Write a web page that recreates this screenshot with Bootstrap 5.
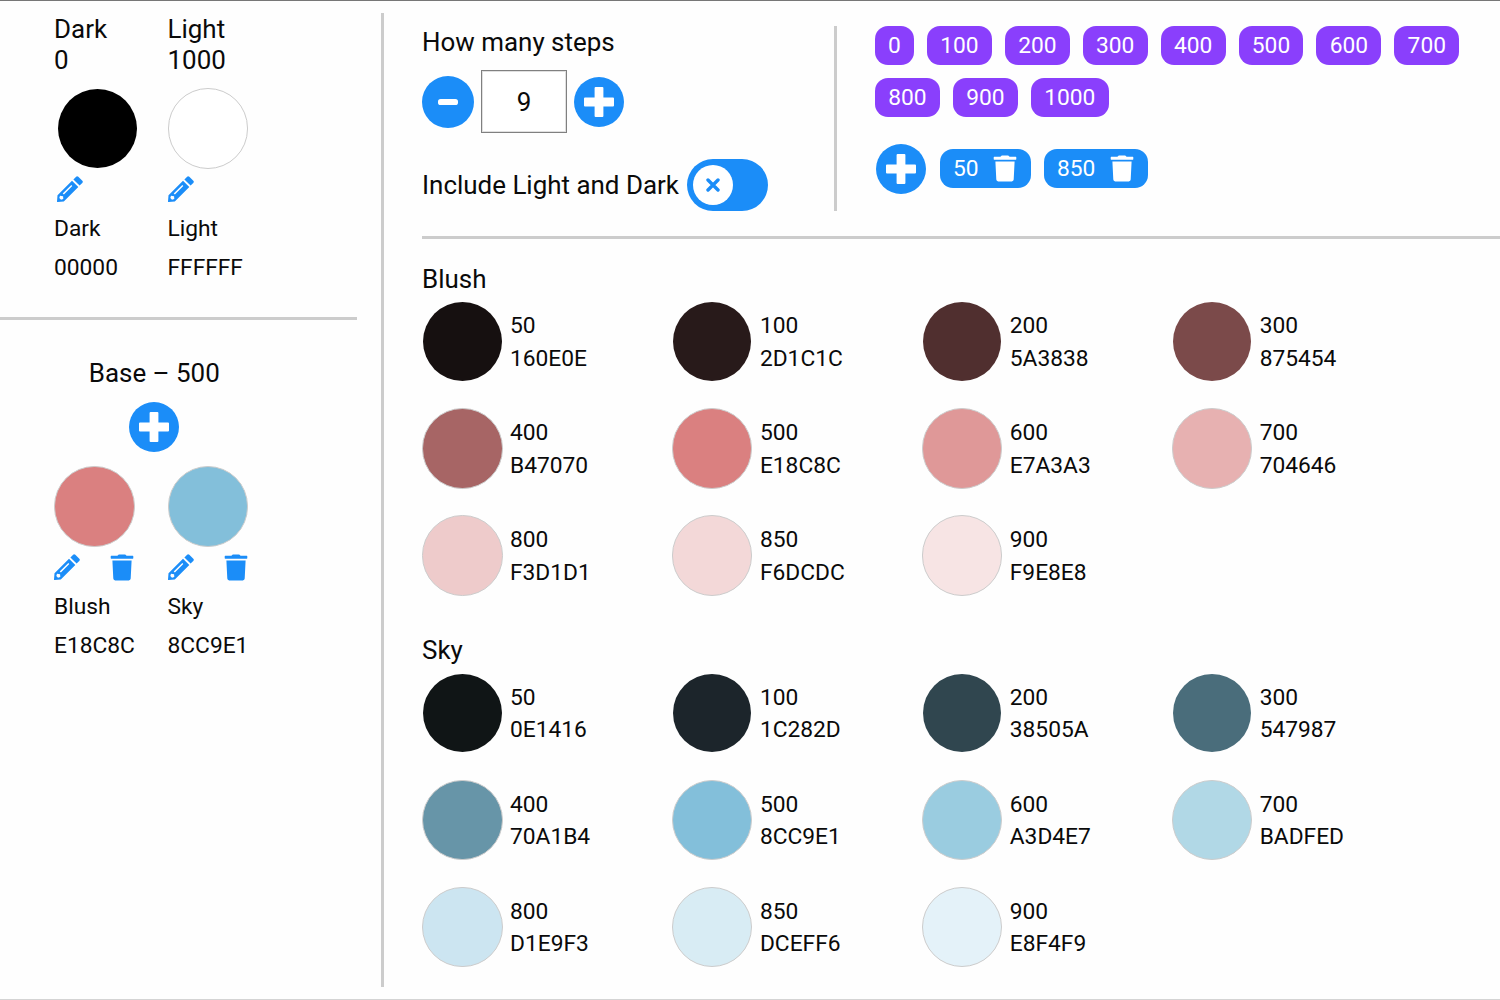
<!DOCTYPE html>
<html lang="en">
<head>
<meta charset="utf-8">
<title>Palette steps</title>
<link href="https://cdn.jsdelivr.net/npm/bootstrap@5.3.0/dist/css/bootstrap.min.css" rel="stylesheet">
<style>
  body { font-family: Roboto, sans-serif; font-size: 22.75px; line-height: 32px; color: #0a0a0a; background: #fefefe; }
  .app-shell { width: 1500px; height: 1000px; border-top: 1px solid #777; border-bottom: 1px solid #d4d4d4; overflow: hidden; }
  .sidebar { width: 384px; height: 974px; margin-top: 12px; border-right: 3px solid #ccc; }
  .sidebar-top { width: 357px; height: 307px; border-bottom: 3px solid #ccc; padding: 1px 0 0 54px; }
  .sidebar-base { padding: 38px 0 0 54px; }
  .base-head { width: 200.5px; }
  .base-head .round-btn { margin-top: 13px; }
  .base-tones { margin-top: 14px; }
  .fs-head { font-size: 25.95px; line-height: 31px; }
  .tone { width: 81px; }
  .tones { gap: 32.5px; }
  .disc { width: 80.5px; height: 80.5px; border-radius: 50%; border: 1px solid #ccc; flex: none; }
  .disc-deep { border-color: transparent; background-clip: padding-box; }
  .disc-end { margin-top: 12px; }
  .disc-inset { margin-left: 3px; }
  .end-icon { margin-top: 7px; margin-bottom: 7px; }
  .base-icons { margin: 7px 1px 6px 0; }
  .tone-name { line-height: 39px; white-space: nowrap; }
  .ico { display: block; fill: #1b8df8; flex: none; }
  .round-btn { width: 50px; height: 50px; border-radius: 50%; background: #1b8df8; border: 0; padding: 0; flex: none; display: flex; align-items: center; justify-content: center; }
  .round-btn svg { display: block; fill: #fff; }
  .minus-btn { width: 52px; height: 52px; }
  .content { width: 1078px; margin-left: 38px; }
  .toolbar { height: 238px; border-bottom: 3px solid #ccc; padding-top: 25px; }
  .steps-panel { width: 415px; height: 185px; border-right: 3px solid #ccc; padding-top: 1px; }
  .step-row { margin-top: 12px; }
  .toggle-row { margin-top: 26px; }
  .step-field { width: 86px; height: 63px; border: 1px solid #808080; outline: 1px solid #e0e0e0; outline-offset: -2px; border-radius: 0; padding: 0; text-align: center; font-size: 25.95px; color: #0a0a0a; background: #fff; margin: 0 7px; }
  .toggle { width: 81px; height: 52px; border-radius: 26px; background: #1b8df8; padding: 6px; margin-left: 8px; }
  .toggle-knob { width: 40px; height: 40px; border-radius: 50%; background: #fff; display: flex; align-items: center; justify-content: center; }
  .chips { width: 600px; padding: .3px 0 0 38px; }
  .chip { height: 39px; width: 64.9px; border-radius: 13px; padding: 1px 0 0; color: #fff; background: #8a3ffc; display: flex; align-items: center; justify-content: center; }
  .chip-zero { width: 39px; }
  .chip-wide { width: 78px; }
  .chip-blue { background: #1b8df8; justify-content: space-between; padding: 0 14px 0 13px; }
  .chip-gap { gap: 13px; }
  .custom-steps { margin-top: 26.7px; padding-left: 1px; }
  .custom-steps .round-btn { margin-right: 1px; }
  .w-50step { width: 91px; }
  .w-850step { width: 104px; }
  .palette { display: grid; grid-template-columns: repeat(4, 249.9px); grid-auto-rows: 81px; row-gap: 26.1px; }
  .palette-title { height: 31px; margin-bottom: 6px; }
  .palette-first { margin-top: 25px; }
  .palette-next { margin-top: 39.3px; }
  .sw { display: flex; align-items: center; gap: 7.5px; line-height: 32.2px; white-space: nowrap; }
  .sw-text { padding-top: 2px; }
</style>
</head>
<body>
<svg class="d-none" xmlns="http://www.w3.org/2000/svg">
  <symbol id="pencil" viewBox="0 0 26 26"><path fill-rule="evenodd" d="M0 25.4.5 19.3 15 4.8 21.3 11 6.8 25.5.6 26Q0 26 0 25.4ZM3 19.8 2.3 22 4 23.7 6.3 23 6.1 20.3ZM5.7 17.6 6.9 18.5 15.3 10.1 14.3 9.1Z"/><path d="M16.4 3.4 19.1.7Q20.2-.3 21.3.7L25.3 4.7Q26.3 5.8 25.3 6.9L22.6 9.6Z"/></symbol>
  <symbol id="trash" viewBox="0 0 24 27"><path d="M1.2 1.8H7.4L8.8.5H15.2L16.6 1.8H22.8Q23.3 1.8 23.3 2.4V4.1Q23.3 4.7 22.8 4.7H1.2Q.7 4.7.7 4.1V2.4Q.7 1.8 1.2 1.8ZM2.4 6.4H21.6L20.7 24.6Q20.6 26.4 18.8 26.4H5.2Q3.4 26.4 3.3 24.6Z"/></symbol>
  <symbol id="plus" viewBox="0 0 30 30"><path d="M11.6 0H18.4Q19.4 0 19.4 1V10.6H29Q30 10.6 30 11.6V18.4Q30 19.4 29 19.4H19.4V29Q19.4 30 18.4 30H11.6Q10.6 30 10.6 29V19.4H1Q0 19.4 0 18.4V11.6Q0 10.6 1 10.6H10.6V1Q10.6 0 11.6 0Z"/></symbol>
</svg>
<div class="app-shell d-flex">
  <aside class="sidebar flex-shrink-0">
    <section class="sidebar-top">
      <div class="d-flex tones">
        <div class="tone">
          <div class="fs-head">Dark<br>0</div>
          <div class="disc disc-deep disc-end disc-inset" style="background-color:#000"></div>
          <svg class="ico end-icon disc-inset" width="26" height="26"><use href="#pencil"/></svg>
          <div class="tone-name">Dark</div><div class="tone-name">00000</div>
        </div>
        <div class="tone">
          <div class="fs-head">Light<br>1000</div>
          <div class="disc disc-end" style="background-color:#fff"></div>
          <svg class="ico end-icon" width="26" height="26"><use href="#pencil"/></svg>
          <div class="tone-name">Light</div><div class="tone-name">FFFFFF</div>
        </div>
      </div>
    </section>
    <section class="sidebar-base">
      <div class="base-head d-flex flex-column align-items-center">
        <div class="fs-head">Base – 500</div>
        <button class="round-btn" type="button" aria-label="Add base"><svg width="30" height="30"><use href="#plus"/></svg></button>
      </div>
      <div class="base-tones d-flex tones">
        <div class="tone">
          <div class="disc" style="background-color:#da8080"></div>
          <div class="base-icons d-flex justify-content-between"><svg class="ico" width="26" height="26"><use href="#pencil"/></svg><svg class="ico" width="24" height="27"><use href="#trash"/></svg></div>
          <div class="tone-name">Blush</div><div class="tone-name">E18C8C</div>
        </div>
        <div class="tone">
          <div class="disc" style="background-color:#83bfda"></div>
          <div class="base-icons d-flex justify-content-between"><svg class="ico" width="26" height="26"><use href="#pencil"/></svg><svg class="ico" width="24" height="27"><use href="#trash"/></svg></div>
          <div class="tone-name">Sky</div><div class="tone-name">8CC9E1</div>
        </div>
      </div>
    </section>
  </aside>
  <main class="content flex-shrink-0">
    <header class="toolbar d-flex">
      <section class="steps-panel flex-shrink-0">
        <div class="fs-head">How many steps</div>
        <div class="step-row d-flex align-items-center">
          <button class="round-btn minus-btn" type="button" aria-label="Fewer"><svg width="20" height="6"><rect width="20" height="6" rx="2.6"/></svg></button>
          <input class="step-field" value="9" aria-label="Steps">
          <button class="round-btn" type="button" aria-label="More"><svg width="30" height="30"><use href="#plus"/></svg></button>
        </div>
        <div class="toggle-row d-flex align-items-center">
          <span class="fs-head text-nowrap">Include Light and Dark</span>
          <span class="toggle"><span class="toggle-knob"><svg width="14" height="14" viewBox="0 0 14 14"><path d="M2 2 12 12M12 2 2 12" fill="none" stroke="#1b8df8" stroke-width="3.4" stroke-linecap="round"/></svg></span></span>
        </div>
      </section>
      <section class="chips flex-grow-1">
        <div class="d-flex flex-wrap chip-gap">
          <span class="chip chip-zero">0</span><span class="chip">100</span><span class="chip">200</span><span class="chip">300</span><span class="chip">400</span><span class="chip">500</span><span class="chip">600</span><span class="chip">700</span><span class="chip">800</span><span class="chip">900</span><span class="chip chip-wide">1000</span>
        </div>
        <div class="custom-steps d-flex align-items-center chip-gap">
          <button class="round-btn" type="button" aria-label="Add step"><svg width="30" height="30"><use href="#plus"/></svg></button>
          <span class="chip chip-blue w-50step">50<svg width="24" height="27" fill="#fff"><use href="#trash"/></svg></span>
          <span class="chip chip-blue w-850step">850<svg width="24" height="27" fill="#fff"><use href="#trash"/></svg></span>
        </div>
      </section>
    </header>
    <section class="palette-first">
      <div class="fs-head palette-title">Blush</div>
      <div class="palette">
        <div class="sw"><span class="disc disc-deep" style="background-color:#161010"></span><span class="sw-text">50<br>160E0E</span></div>
        <div class="sw"><span class="disc disc-deep" style="background-color:#281a1a"></span><span class="sw-text">100<br>2D1C1C</span></div>
        <div class="sw"><span class="disc disc-deep" style="background-color:#502f2f"></span><span class="sw-text">200<br>5A3838</span></div>
        <div class="sw"><span class="disc disc-deep" style="background-color:#7b4a4a"></span><span class="sw-text">300<br>875454</span></div>
        <div class="sw"><span class="disc" style="background-color:#a76565"></span><span class="sw-text">400<br>B47070</span></div>
        <div class="sw"><span class="disc" style="background-color:#da8080"></span><span class="sw-text">500<br>E18C8C</span></div>
        <div class="sw"><span class="disc" style="background-color:#df9898"></span><span class="sw-text">600<br>E7A3A3</span></div>
        <div class="sw"><span class="disc" style="background-color:#e7b1b1"></span><span class="sw-text">700<br>704646</span></div>
        <div class="sw"><span class="disc" style="background-color:#eecbcb"></span><span class="sw-text">800<br>F3D1D1</span></div>
        <div class="sw"><span class="disc" style="background-color:#f3d8d8"></span><span class="sw-text">850<br>F6DCDC</span></div>
        <div class="sw"><span class="disc" style="background-color:#f7e4e4"></span><span class="sw-text">900<br>F9E8E8</span></div>
      </div>
    </section>
    <section class="palette-next">
      <div class="fs-head palette-title">Sky</div>
      <div class="palette">
        <div class="sw"><span class="disc disc-deep" style="background-color:#101516"></span><span class="sw-text">50<br>0E1416</span></div>
        <div class="sw"><span class="disc disc-deep" style="background-color:#1c252b"></span><span class="sw-text">100<br>1C282D</span></div>
        <div class="sw"><span class="disc disc-deep" style="background-color:#30464f"></span><span class="sw-text">200<br>38505A</span></div>
        <div class="sw"><span class="disc disc-deep" style="background-color:#4a6d7b"></span><span class="sw-text">300<br>547987</span></div>
        <div class="sw"><span class="disc" style="background-color:#6795a8"></span><span class="sw-text">400<br>70A1B4</span></div>
        <div class="sw"><span class="disc" style="background-color:#83bfda"></span><span class="sw-text">500<br>8CC9E1</span></div>
        <div class="sw"><span class="disc" style="background-color:#9acce0"></span><span class="sw-text">600<br>A3D4E7</span></div>
        <div class="sw"><span class="disc" style="background-color:#b1d8e6"></span><span class="sw-text">700<br>BADFED</span></div>
        <div class="sw"><span class="disc" style="background-color:#cce5f1"></span><span class="sw-text">800<br>D1E9F3</span></div>
        <div class="sw"><span class="disc" style="background-color:#d8ecf4"></span><span class="sw-text">850<br>DCEFF6</span></div>
        <div class="sw"><span class="disc" style="background-color:#e4f2f9"></span><span class="sw-text">900<br>E8F4F9</span></div>
      </div>
    </section>
  </main>
</div>
<script src="https://cdn.jsdelivr.net/npm/bootstrap@5.3.0/dist/js/bootstrap.bundle.min.js"></script>
</body>
</html>
